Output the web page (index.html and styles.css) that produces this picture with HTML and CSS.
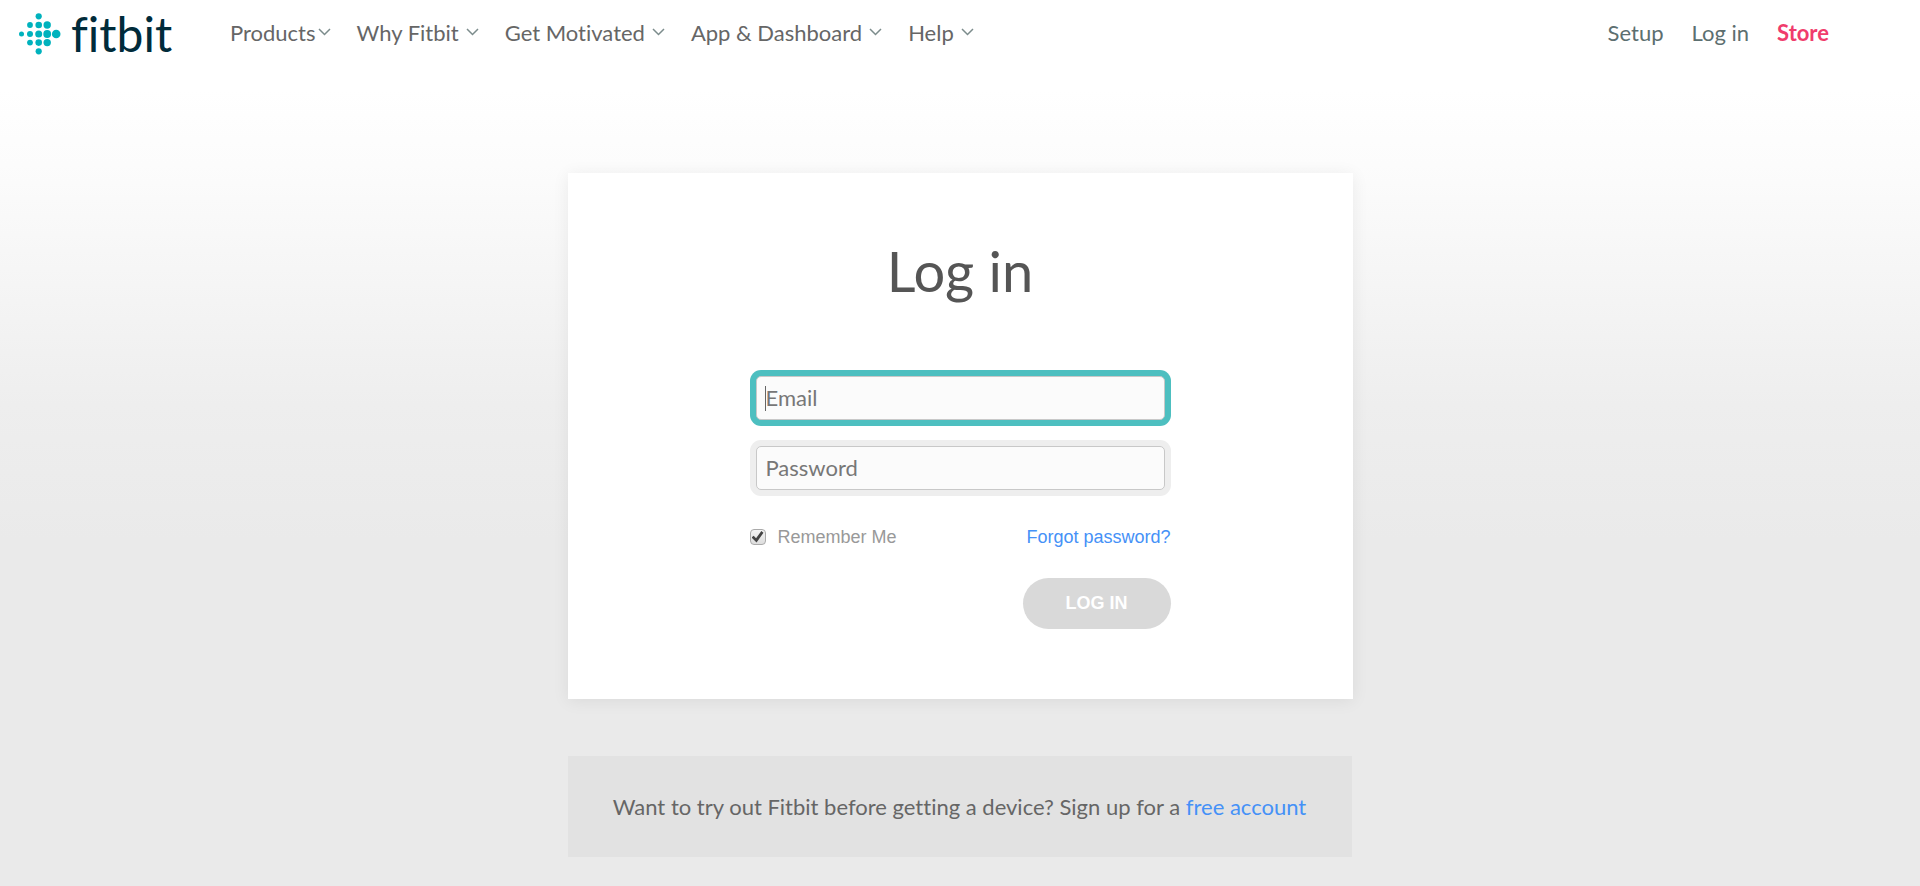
FILE: index.html
```html
<!DOCTYPE html>
<html lang="en">
<head>
  <meta charset="UTF-8" />
  <meta name="viewport" content="width=device-width, initial-scale=1.0"/>
  <title>Fitbit - Log in</title>
  <link rel="stylesheet" href="styles.css">
</head>
<body>
  <header class="header">
    <a class="logo" href="#">
      <svg class="logo-mark" viewBox="0 0 42 42" aria-hidden="true">
        <circle cx="2.5" cy="21" r="2.5"/>
        <circle cx="11" cy="12" r="2.9"/>
        <circle cx="11" cy="21" r="3"/>
        <circle cx="11" cy="29.6" r="2.9"/>
        <circle cx="19.7" cy="3.3" r="3.1"/>
        <circle cx="19.7" cy="12" r="3.3"/>
        <circle cx="19.7" cy="21" r="3.5"/>
        <circle cx="19.7" cy="29.6" r="3.3"/>
        <circle cx="19.7" cy="38.3" r="3.1"/>
        <circle cx="28.2" cy="12" r="3.7"/>
        <circle cx="28.2" cy="21" r="3.9"/>
        <circle cx="28.2" cy="29.6" r="3.7"/>
        <circle cx="37.2" cy="21" r="4.3"/>
      </svg>
      <span class="logo-text">fitbit</span>
    </a>
    <nav class="main-nav">
      <a class="tight" href="#">Products<svg class="chevron" viewBox="0 0 13 8"><path d="M1 1l5.5 5.5L12 1"/></svg></a>
      <a href="#">Why Fitbit<svg class="chevron" viewBox="0 0 13 8"><path d="M1 1l5.5 5.5L12 1"/></svg></a>
      <a href="#">Get Motivated<svg class="chevron" viewBox="0 0 13 8"><path d="M1 1l5.5 5.5L12 1"/></svg></a>
      <a href="#">App &amp; Dashboard<svg class="chevron" viewBox="0 0 13 8"><path d="M1 1l5.5 5.5L12 1"/></svg></a>
      <a href="#">Help<svg class="chevron" viewBox="0 0 13 8"><path d="M1 1l5.5 5.5L12 1"/></svg></a>
    </nav>
    <nav class="user-nav">
      <a href="#">Setup</a>
      <a href="#">Log in</a>
      <a class="store" href="#">Store</a>
    </nav>
  </header>

  <main class="container">
    <section class="card">
      <h1>Log in</h1>
      <form class="login-form">
        <input class="field" type="email" placeholder="Email" aria-label="Email" autofocus />
        <input class="field" type="password" placeholder="Password" aria-label="Password" />
        <div class="options">
          <label class="remember"><input type="checkbox" checked /> Remember Me</label>
          <a href="#">Forgot password?</a>
        </div>
        <button class="btn" type="submit">LOG IN</button>
      </form>
    </section>

    <p class="signup">Want to try out Fitbit before getting a device? Sign up for a <a href="#">free account</a></p>
  </main>
</body>
</html>
```
FILE: styles.css
```css
* {
  box-sizing: border-box;
}
body {
  font-family: Lato, "Open Sans", sans-serif;
  font-variant-ligatures: none;
  margin: 0;
  min-height: 100vh;
  color: #666;
  background: #eaeaea linear-gradient(#fff 90px, #fcfcfc 165px, #eee 405px, #eaeaea 540px) no-repeat;
}
a {
  color: #4591f7;
  text-decoration: none;
}

/* Header */
.header {
  display: flex;
  align-items: center;
  height: 68px;
  padding: 0 91px 0 19px;
  background: #fff;
  font-size: 22px;
}
.logo {
  display: flex;
  align-items: center;
  gap: 10px;
  width: 211px;
}
.logo-mark {
  width: 42px;
  height: 42px;
  fill: #00b2bd;
}
.logo-text {
  color: #002b3a;
  font-size: 48px;
  line-height: 56px;
}
.main-nav, .user-nav {
  display: flex;
  gap: 26px;
  padding-bottom: 4px;
}
.main-nav a {
  display: flex;
  align-items: center;
  gap: 7px;
  color: #666;
}
.main-nav .tight {
  gap: 2px;
}
.chevron {
  width: 13px;
  height: 8px;
  fill: none;
  stroke: #7c8c8c;
  stroke-width: 1.5;
}
.user-nav {
  gap: 28px;
  margin-left: auto;
}
.user-nav a {
  color: #5c6f70;
}
.user-nav .store {
  color: #f03c6c;
  font-weight: bold;
}

/* Login card */
.container {
  max-width: 785px;
  margin: 105px auto 0;
}
.card {
  padding: 64px 182px 70px;
  background: #fff;
  box-shadow: 0 2px 16px rgba(0,0,0,0.07);
}
h1 {
  margin: 0 0 65px;
  color: #555;
  font-size: 56px;
  font-weight: normal;
  line-height: 68px;
  text-align: center;
}
.login-form {
  display: flex;
  flex-direction: column;
}
.field {
  height: 44px;
  margin: 6px 6px 20px;
  padding: 0 9px 2px;
  border: 1px solid #c8c8c8;
  border-radius: 5px;
  outline: none;
  background: #fbfbfb;
  box-shadow: 0 0 0 6px #eee;
  color: #555;
  font-family: inherit;
  font-size: 22px;
}
.field:focus {
  box-shadow: 0 0 0 6px #4dbfc0;
}
/* steady caret while the focused field is empty */
.field:focus:placeholder-shown {
  background: #fbfbfb linear-gradient(#666, #666) 8px center / 1px 25px no-repeat;
}
.field::placeholder {
  color: #777;
}
.options {
  display: flex;
  justify-content: space-between;
  align-items: center;
  margin: 14px 0 28px;
  font-family: "Liberation Sans", Arial, sans-serif;
  font-size: 18px;
  line-height: 26px;
}
.remember {
  display: flex;
  align-items: center;
  gap: 12px;
  color: #999;
}
.remember input {
  display: grid;
  place-items: center;
  appearance: none;
  width: 16px;
  height: 16px;
  margin: 0;
  border: 1px solid #aaa;
  border-radius: 4px;
  background: linear-gradient(#f4f4f4, #ddd);
}
.remember input:checked::before {
  content: "";
  width: 12px;
  height: 12px;
  background: #444;
  clip-path: polygon(0 55%, 18% 40%, 38% 60%, 82% 0, 100% 14%, 42% 96%);
}
.btn {
  align-self: flex-end;
  width: 148px;
  height: 51px;
  border: none;
  border-radius: 26px;
  background: #d9d9d9;
  color: #fff;
  font-family: "Liberation Sans", Arial, sans-serif;
  font-size: 18px;
  font-weight: bold;
  cursor: pointer;
}

.signup {
  margin: 57px 1px 0 0;
  padding: 36px 20px;
  background: #e2e2e2;
  font-size: 22px;
  line-height: 29px;
  text-align: center;
}
```
